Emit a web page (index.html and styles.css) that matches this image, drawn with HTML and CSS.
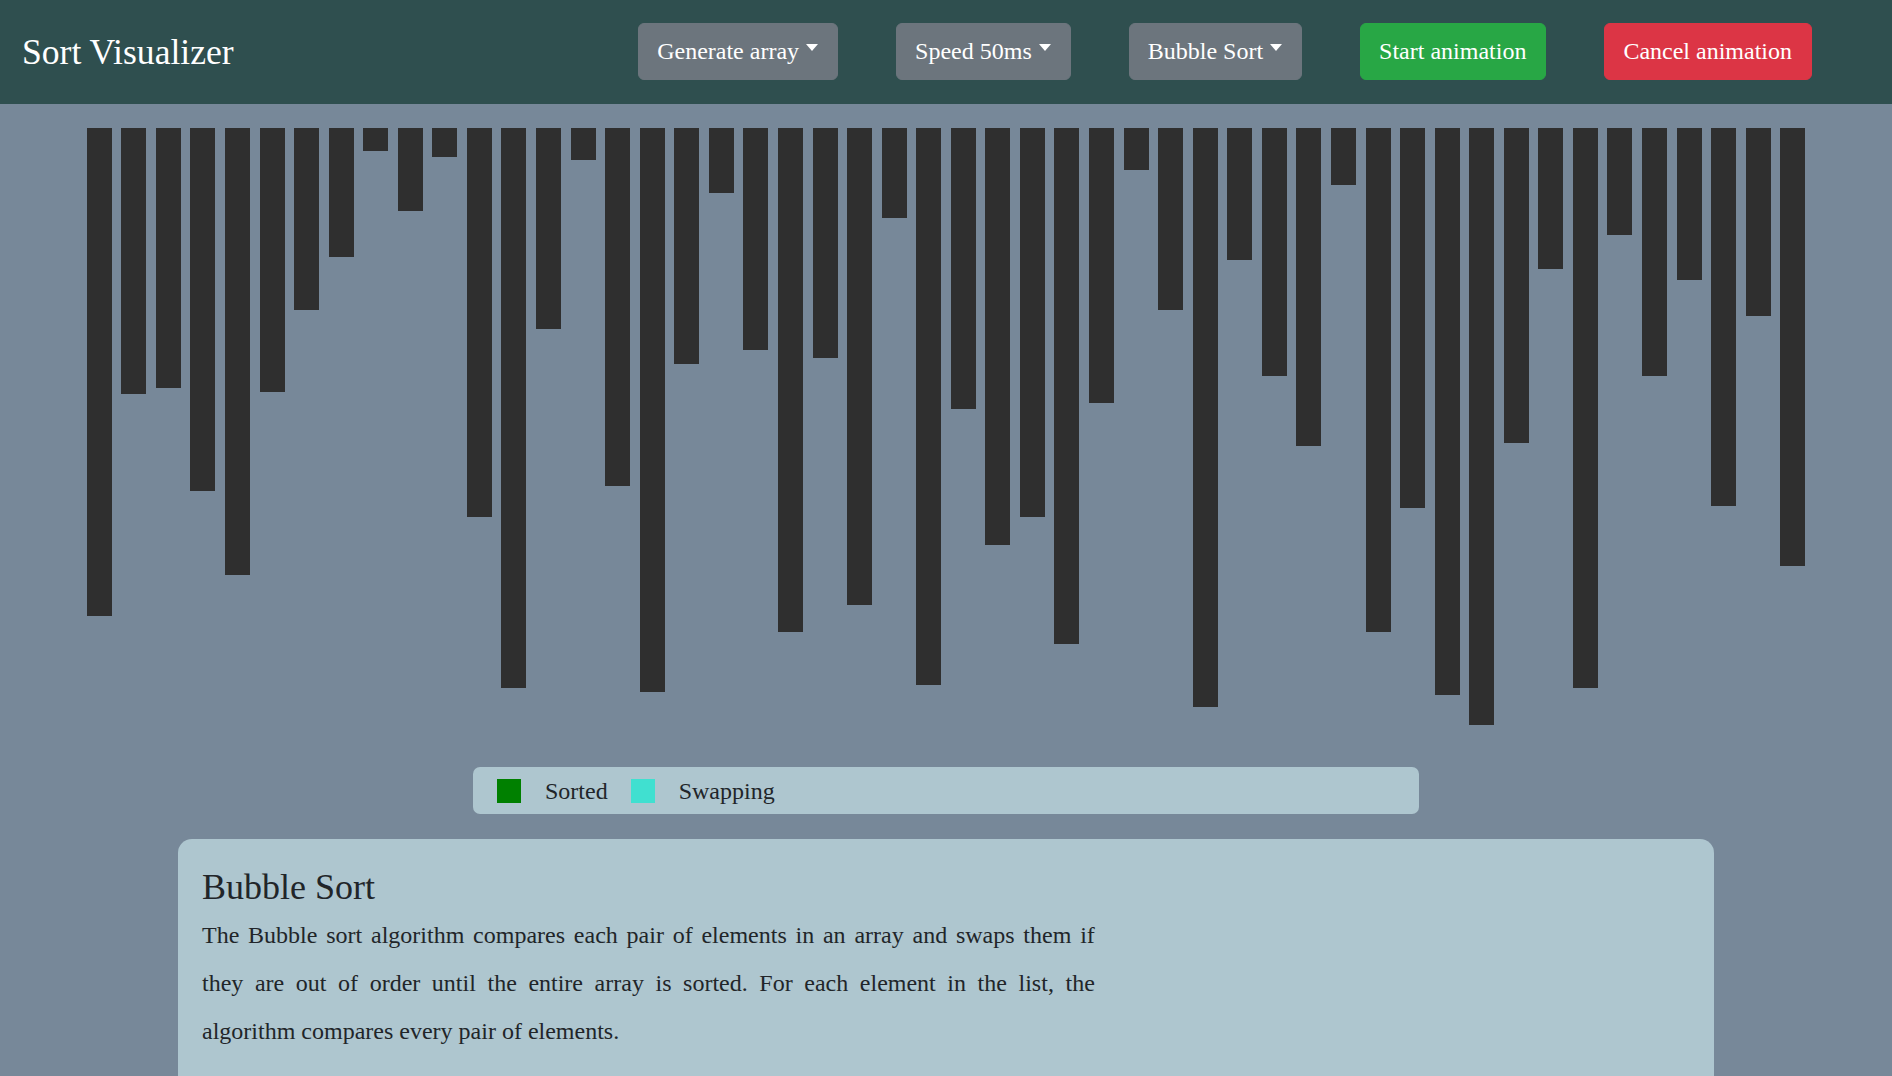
FILE: index.html
```html
<!DOCTYPE html>
<html lang="en">
<head>
<meta charset="utf-8">
<title>Sort Visualizer</title>
<link rel="stylesheet" href="styles.css">
</head>
<body>
<nav class="navbar">
  <span class="brand">Sort Visualizer</span>
  <div class="controls">
    <button class="btn btn-secondary dropdown">Generate array</button>
    <button class="btn btn-secondary dropdown">Speed 50ms</button>
    <button class="btn btn-secondary dropdown">Bubble Sort</button>
    <button class="btn btn-success">Start animation</button>
    <button class="btn btn-danger">Cancel animation</button>
  </div>
</nav>
<main class="main">
  <div class="bars">
    <div class="bar" style="height:488px"></div>
    <div class="bar" style="height:266px"></div>
    <div class="bar" style="height:260px"></div>
    <div class="bar" style="height:363px"></div>
    <div class="bar" style="height:447px"></div>
    <div class="bar" style="height:264px"></div>
    <div class="bar" style="height:182px"></div>
    <div class="bar" style="height:129px"></div>
    <div class="bar" style="height:23px"></div>
    <div class="bar" style="height:83px"></div>
    <div class="bar" style="height:29px"></div>
    <div class="bar" style="height:389px"></div>
    <div class="bar" style="height:560px"></div>
    <div class="bar" style="height:201px"></div>
    <div class="bar" style="height:32px"></div>
    <div class="bar" style="height:358px"></div>
    <div class="bar" style="height:564px"></div>
    <div class="bar" style="height:236px"></div>
    <div class="bar" style="height:65px"></div>
    <div class="bar" style="height:222px"></div>
    <div class="bar" style="height:504px"></div>
    <div class="bar" style="height:230px"></div>
    <div class="bar" style="height:477px"></div>
    <div class="bar" style="height:90px"></div>
    <div class="bar" style="height:557px"></div>
    <div class="bar" style="height:281px"></div>
    <div class="bar" style="height:417px"></div>
    <div class="bar" style="height:389px"></div>
    <div class="bar" style="height:516px"></div>
    <div class="bar" style="height:275px"></div>
    <div class="bar" style="height:42px"></div>
    <div class="bar" style="height:182px"></div>
    <div class="bar" style="height:579px"></div>
    <div class="bar" style="height:132px"></div>
    <div class="bar" style="height:248px"></div>
    <div class="bar" style="height:318px"></div>
    <div class="bar" style="height:57px"></div>
    <div class="bar" style="height:504px"></div>
    <div class="bar" style="height:380px"></div>
    <div class="bar" style="height:567px"></div>
    <div class="bar" style="height:597px"></div>
    <div class="bar" style="height:315px"></div>
    <div class="bar" style="height:141px"></div>
    <div class="bar" style="height:560px"></div>
    <div class="bar" style="height:107px"></div>
    <div class="bar" style="height:248px"></div>
    <div class="bar" style="height:152px"></div>
    <div class="bar" style="height:378px"></div>
    <div class="bar" style="height:188px"></div>
    <div class="bar" style="height:438px"></div>
  </div>
  <div class="legend">
    <span class="swatch swatch-sorted"></span>
    <span class="legend-label">Sorted</span>
    <span class="swatch swatch-swapping"></span>
    <span class="legend-label">Swapping</span>
  </div>
  <section class="card">
    <h4 class="card-title">Bubble Sort</h4>
    <p class="card-text">The Bubble sort algorithm compares each pair of elements in an array and swaps them if they are out of order until the entire array is sorted. For each element in the list, the algorithm compares every pair of elements.</p>
  </section>
</main>
</body>
</html>
```

FILE: styles.css
```css
* {
  box-sizing: border-box;
}

html, body {
  margin: 0;
  padding: 0;
}

body {
  font-family: "Liberation Serif", "Times New Roman", serif;
  font-size: 24px;
  color: #212529;
  background: #778899;
}

.navbar {
  height: 104px;
  background: #2f4f4f;
  display: flex;
  align-items: center;
  padding: 0 80px 0 22px;
}

.brand {
  color: #fff;
  font-size: 35.6px;
  line-height: 1.5;
  margin-top: 2px;
}

.controls {
  margin-left: auto;
  display: flex;
  gap: 58px;
  margin-top: -1px;
}

.btn {
  font-family: inherit;
  font-size: 24px;
  line-height: 36px;
  color: #fff;
  border: 1px solid transparent;
  border-radius: 6px;
  padding: 9px 19px 10px 18px;
  cursor: pointer;
  display: inline-flex;
  align-items: center;
}

.btn-secondary {
  background: #6c757d;
  border-color: #6c757d;
}

.btn-success {
  background: #28a745;
  border-color: #28a745;
}

.btn-danger {
  background: #dc3545;
  border-color: #dc3545;
}

.dropdown::after {
  content: "";
  display: inline-block;
  margin-left: 7px;
  margin-bottom: 8px;
  border-top: 7px solid #fff;
  border-left: 6px solid transparent;
  border-right: 6px solid transparent;
}

.main {
  padding-top: 24px;
}

.bars {
  height: 615px;
  display: flex;
  justify-content: center;
  align-items: flex-start;
  gap: 9.57px;
  margin-bottom: 24px;
}

.bar {
  width: 25px;
  flex: none;
  background: #2f2f2f;
}

.legend {
  width: 50%;
  margin: 0 auto;
  background: #aec6cf;
  border-radius: 7px;
  padding: 12px 24px 11px;
  display: flex;
  align-items: center;
  line-height: 24px;
}

.swatch {
  width: 24px;
  height: 24px;
  margin-right: 24px;
  flex: none;
}

.swatch-sorted {
  background: #008000;
}

.swatch-swapping {
  background: #40e0d0;
}

.legend-label {
  margin-right: 23px;
}

.card {
  width: 1536px;
  margin: 25px auto 0;
  background: #aec6cf;
  border-radius: 14px;
  padding: 27px 24px 120px;
}

.card-title {
  margin: 0 0 2px;
  font-size: 36px;
  font-weight: 400;
  line-height: 1.2;
}

.card-text {
  margin: 0;
  width: 60%;
  line-height: 48px;
  text-align: justify;
}
```
